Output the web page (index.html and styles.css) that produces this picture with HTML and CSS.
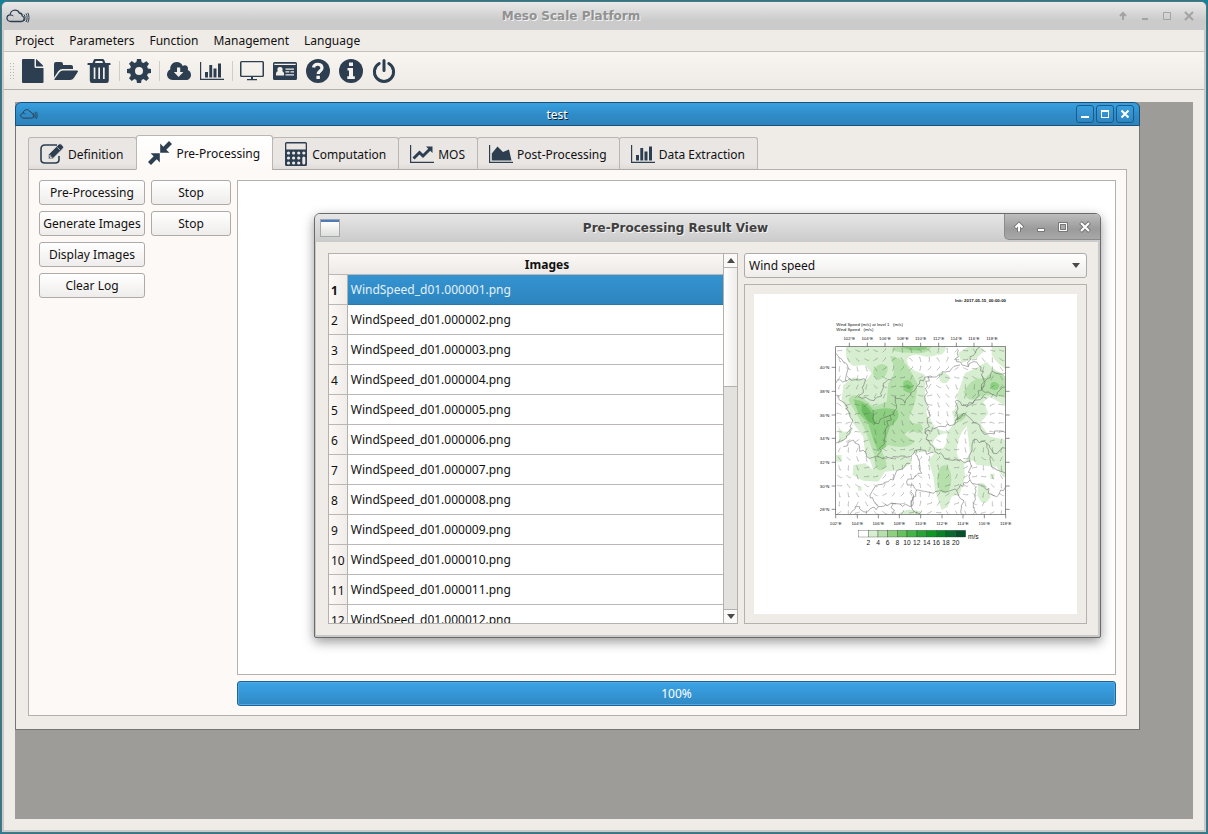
FILE: index.html
```html
<!DOCTYPE html>
<html lang="en">
<head>
<meta charset="utf-8">
<title>Meso Scale Platform</title>
<link rel="stylesheet" href="styles.css">
</head>
<body>
<svg class="sprite" aria-hidden="true">
  <symbol id="i-cloud" viewBox="0 0 24 14">
    <path d="M5 12.5C2.500 12.500 1 11 1 9.200 1 7.300 2.400 6 4.200 5.900 4.300 3.200 6.400 1.200 9 1.200c2 0 3.600 1.100 4.300 2.800 1.800.1 3 1.400 3 3 1.300.5 1.900 1.400 1.900 2.600 0 1.700-1.300 2.900-3 2.900z" fill="none" stroke="#2c3e50" stroke-width="1.300"/>
    <path d="M4.500 6c1.300 0 2.100.3 2.900 1M18 5.500c1.400 2 1.400 4.600 0 6.500M20 4.500c1.500 2.600 1.500 5.800 0 8.500M21.800 3.800c1.600 3 1.600 6.600 0 9.700" fill="none" stroke="#2c3e50" stroke-width="1"/>
  </symbol>
  <symbol id="i-file" viewBox="0 0 24 24"><path d="M2 0H13.500V7.500Q13.500 9 15 9H22.500V23Q22.500 24 21.500 24H2Q1 24 1 23V1Q1 0 2 0zM15 0.300Q15.800.4 16.300 1L21.500 6.100Q22 6.600 22.200 7.500H15z"/></symbol>
  <symbol id="i-folder" viewBox="0 0 24 24"><path d="M0 18.500V5Q0 3 2 3H7Q9 3 9 5V6H17Q19 6 19 8V10H8.500Q6 10 4.400 12zM.3 20.300L5.300 13.600Q6.700 11.600 9 11.600H23Q24.600 11.600 23.700 13L20 18.700Q18.500 21 16 21H1.200Q-.1 21 .3 20.300z"/></symbol>
  <symbol id="i-trash" viewBox="0 0 24 24"><path fill-rule="evenodd" d="M8 0H15.500Q16.800 0 17.300 1.200L18.400 4H23Q23.500 4 23.500 4.600V5.900H21.800V21.500Q21.800 24 19.500 24H5Q2.800 24 2.800 21.500V5.900H.5V4.600Q.5 4 1 4H5.500L6.600 1.200Q7 0 8 0zM8.700 1.900L7.900 4H16L15.200 1.900zM6.700 8.500V20H8.400V8.500zM11.300 8.500V20H13V8.500zM16 8.500V20H17.700V8.500z"/></symbol>
  <symbol id="i-gear" viewBox="0 0 24 24"><path fill-rule="evenodd" d="M10 0H14L14.700 3.200 16.600 4 19.400 2.200 22 4.800 20.100 7.500 20.900 9.400 24 10V14L20.900 14.600 20.100 16.500 22 19.300 19.300 22 16.500 20.100 14.600 20.900 14 24H10L9.400 20.900 7.500 20.100 4.700 22 2 19.300 3.900 16.500 3.100 14.600 0 14V10L3.100 9.400 3.900 7.500 2 4.700 4.700 2 7.500 3.900 9.400 3.100zM12 8A4 4 0 1 0 12 16A4 4 0 1 0 12 8z"/></symbol>
  <symbol id="i-download" viewBox="0 0 24 24"><path fill-rule="evenodd" d="M5.600 21C2.400 21 0 18.600 0 15.600 0 13.300 1.300 11.500 3.200 10.600 3 6.200 5.800 3 9.700 3c2.800 0 5 1.500 6 4 .6-.5 1.300-.8 2.100-.8 2 0 3.400 1.500 3.200 3.800l-.3 1c2 .6 3.300 2.500 3.300 5 0 2.900-2.100 5-4.900 5zM10 8.500V13H6.800L11.600 18 16.400 13H13.200V8.500z"/></symbol>
  <symbol id="i-bars" viewBox="0 0 24 24"><path d="M0 3H1.200V19.800H24V21H0zM5 13H8V18.500H5zM9.300 6H12.200V18.500H9.300zM13.500 9.500H16.500V18.500H13.500zM18 4.500H21V18.500H18z"/></symbol>
  <symbol id="i-desktop" viewBox="0 0 24 24"><path fill-rule="evenodd" d="M1.500 2H22.500Q24 2 24 3.500V16.500Q24 18 22.500 18H13V20H17V21.200H7V20H11V18H1.500Q0 18 0 16.500V3.500Q0 2 1.500 2zM1.500 3.300V16.700H22.500V3.300z"/></symbol>
  <symbol id="i-card" viewBox="0 0 24 24"><path fill-rule="evenodd" d="M1.500 3H22.500Q24 3 24 4.500V19.500Q24 21 22.500 21H1.500Q0 21 0 19.500V4.500Q0 3 1.500 3zM1.300 4.700V6H22.700V4.700zM3 16.500H11Q11.500 13 9.300 12.200 10.500 8 7 8 3.500 8 4.700 12.200 2.600 13 3 16.500zM12.500 9.500V10.700H21V9.500zM12.500 12.300V13.500H16.300V12.300zM17.500 12.300V13.500H21V12.300zM12.500 15.200V16.400H21V15.200z"/></symbol>
  <symbol id="i-help" viewBox="0 0 24 24"><circle cx="12" cy="12" r="12"/><path d="M7.500 8.500C8.500 3.700 16 4.500 16 9c0 3-3.800 3-3.800 6" fill="none" stroke="#f6f3ef" stroke-width="3.200"/><path fill="#f6f3ef" d="M10.400 16.700H13.900V20H10.400z"/></symbol>
  <symbol id="i-info" viewBox="0 0 24 24"><circle cx="12" cy="12" r="12"/><path fill="#f6f3ef" d="M10 3.500H14V7H10zM8.500 9H14V17.300H15.800V20H8.300V17.300H10V11.600H8.500z"/></symbol>
  <symbol id="i-power" viewBox="0 0 24 24"><path d="M7.200 4.500A9.600 9.600 0 1 0 16.800 4.500M12 1.500V11.500" fill="none" stroke="#2c3e50" stroke-width="3" stroke-linecap="round"/></symbol>
  <symbol id="i-edit" viewBox="0 0 24 24"><path d="M17 3H5Q1 3 1 7V17.500Q1 21 5 21H15Q19 21 19 17.500V14" fill="none" stroke="#2c3e50" stroke-width="1.600"/><path d="M8.500 12.500L18.800 2.300Q20 1.200 21.200 2.300L23 4.200Q24 5.300 23 6.400L12.700 16.700H8.500zM17.300 5.300L20 8.100" stroke="#e9e6e3" stroke-width=".6"/><path d="M10 12.800V15.300H12.300" fill="none" stroke="#e9e6e3"/></symbol>
  <symbol id="i-compress" viewBox="0 0 24 24"><path d="M12.200 11.800V2.600L15.300 5.700 21 0 24 3 18.300 8.700 21.400 11.800zM11.800 12.200V21.400L8.700 18.300 3 24 0 21 5.700 15.300 2.600 12.200z"/></symbol>
  <symbol id="i-calc" viewBox="0 0 24 24"><path fill-rule="evenodd" d="M2.500 0H21.500Q23 0 23 1.500V22.500Q23 24 21.500 24H2.500Q1 24 1 22.500V1.500Q1 0 2.500 0zM2.300 1.500V7.500H21.700V1.500z"/><g fill="#ebe8e5"><circle cx="4.500" cy="11" r="1.600"/><circle cx="9.600" cy="11" r="1.600"/><circle cx="14.700" cy="11" r="1.600"/><circle cx="19.800" cy="11" r="1.600"/><circle cx="4.500" cy="16" r="1.600"/><circle cx="9.600" cy="16" r="1.600"/><circle cx="14.700" cy="16" r="1.600"/><circle cx="4.500" cy="21" r="1.600"/><circle cx="9.600" cy="21" r="1.600"/><circle cx="14.700" cy="21" r="1.600"/><rect x="18.300" y="14.500" width="3" height="8" rx="1.500"/></g></symbol>
  <symbol id="i-line" viewBox="0 0 24 24"><path d="M0 3H1.200V19.800H24V21H0z"/><path d="M3.500 16.500L9.500 10.500 13 14 20.500 6.500" fill="none" stroke="#2c3e50" stroke-width="3"/><path d="M16 4.500H22.500V11z"/></symbol>
  <symbol id="i-area" viewBox="0 0 24 24"><path d="M0 3H1.200V19.800H24V21H0zM2.800 18.500V11.500L8.500 4.500 14 10 20 7.500 22.500 18.500z"/></symbol>
</svg>

<div class="frame">
  <header class="titlebar">
    <svg class="app-icon"><use href="#i-cloud"/></svg>
    <h1>Meso Scale Platform</h1>
    <div class="win-buttons">
      <button aria-label="Shade"><svg viewBox="0 0 10 10"><path d="M5 9V2M2 5L5 2 8 5" fill="none" stroke="currentColor" stroke-width="2"/></svg></button>
      <button aria-label="Minimize"><svg viewBox="0 0 10 10"><path d="M2 7H8V9H2z" fill="currentColor"/></svg></button>
      <button aria-label="Maximize"><svg viewBox="0 0 10 10"><path d="M1.500 1.500H8.500V8.500H1.500z" fill="none" stroke="currentColor"/></svg></button>
      <button aria-label="Close"><svg viewBox="0 0 10 10"><path d="M1 1L9 9M9 1L1 9" stroke="currentColor" stroke-width="2"/></svg></button>
    </div>
  </header>
  <nav class="menubar">
    <button>Project</button><button>Parameters</button><button>Function</button><button>Management</button><button>Language</button>
  </nav>
  <div class="toolbar">
    <span class="grip"></span>
    <button aria-label="New"><svg><use href="#i-file"/></svg></button>
    <button aria-label="Open"><svg><use href="#i-folder"/></svg></button>
    <button aria-label="Delete"><svg><use href="#i-trash"/></svg></button>
    <span class="sep"></span>
    <button aria-label="Settings"><svg><use href="#i-gear"/></svg></button>
    <span class="sep"></span>
    <button aria-label="Download"><svg><use href="#i-download"/></svg></button>
    <button aria-label="Charts"><svg><use href="#i-bars"/></svg></button>
    <span class="sep"></span>
    <button aria-label="Display"><svg><use href="#i-desktop"/></svg></button>
    <button aria-label="License"><svg><use href="#i-card"/></svg></button>
    <button aria-label="Help"><svg><use href="#i-help"/></svg></button>
    <button aria-label="About"><svg><use href="#i-info"/></svg></button>
    <button aria-label="Quit"><svg><use href="#i-power"/></svg></button>
  </div>

  <main class="workspace">
    <div class="mdi">
      <section class="sub-window">
        <header class="sub-title">
          <svg class="sub-icon"><use href="#i-cloud"/></svg>
          <h2>test</h2>
          <div class="sub-buttons">
            <button aria-label="Minimize"><svg viewBox="0 0 10 10"><path d="M1 7H9V9H1z" fill="#fff"/></svg></button>
            <button aria-label="Maximize"><svg viewBox="0 0 10 10"><path fill-rule="evenodd" d="M1 1H9V9H1zM2 3V8H8V3z" fill="#fff"/></svg></button>
            <button aria-label="Close"><svg viewBox="0 0 10 10"><path d="M1.500 1.500L8.500 8.500M8.500 1.500L1.500 8.500" stroke="#fff" stroke-width="2"/></svg></button>
          </div>
        </header>
        <div class="sub-body">
          <div class="tabs" role="tablist">
            <button role="tab"><svg><use href="#i-edit"/></svg><span>Definition</span></button>
            <button role="tab" class="active" aria-selected="true"><svg><use href="#i-compress"/></svg><span>Pre-Processing</span></button>
            <button role="tab"><svg><use href="#i-calc"/></svg><span>Computation</span></button>
            <button role="tab"><svg><use href="#i-line"/></svg><span>MOS</span></button>
            <button role="tab"><svg><use href="#i-area"/></svg><span>Post-Processing</span></button>
            <button role="tab"><svg><use href="#i-bars"/></svg><span>Data Extraction</span></button>
          </div>
          <div class="panel">
            <div class="actions">
              <button class="btn">Pre-Processing</button><button class="btn">Stop</button>
              <button class="btn">Generate Images</button><button class="btn">Stop</button>
              <button class="btn">Display Images</button><span></span>
              <button class="btn">Clear Log</button>
            </div>
            <div class="output">
              <div class="log">
                <section class="dialog">
                  <header class="dialog-title">
                    <span class="dialog-icon"></span>
                    <h2>Pre-Processing Result View</h2>
                    <div class="win-buttons raised">
                      <button aria-label="Shade"><svg viewBox="0 0 12 12"><path d="M6 11V3M2 7L6 3 10 7" fill="none" stroke="#777" stroke-width="4"/><path d="M6 10.500V3M2.500 6.500L6 3 9.500 6.500" fill="none" stroke="#fff" stroke-width="2"/></svg></button>
                      <button aria-label="Minimize"><svg viewBox="0 0 12 12"><path d="M2.500 7.500H9.500V10.500H2.500z" fill="#fff" stroke="#777"/></svg></button>
                      <button aria-label="Maximize"><svg viewBox="0 0 12 12"><path d="M1.500 1.500H10.500V10.500H1.500z" fill="#aaa" stroke="#777"/><path d="M2.500 2.500H9.500V9.500H2.500z" fill="none" stroke="#fff"/><path d="M3.500 3.500H8.500V8.500H3.500z" fill="none" stroke="#777"/></svg></button>
                      <button aria-label="Close"><svg viewBox="0 0 12 12"><path d="M1.500 1.500L10.500 10.500M10.500 1.500L1.500 10.500" stroke="#777" stroke-width="4"/><path d="M2 2L10 10M10 2L2 10" stroke="#fff" stroke-width="2"/></svg></button>
                    </div>
                  </header>
                  <div class="dialog-body">
                    <div class="list">
                      <div class="list-view">
                        <table>
                          <thead><tr><th colspan="2">Images</th></tr></thead>
                          <tbody>
                            <tr class="selected"><th>1</th><td>WindSpeed_d01.000001.png</td></tr>
                            <tr><th>2</th><td>WindSpeed_d01.000002.png</td></tr>
                            <tr><th>3</th><td>WindSpeed_d01.000003.png</td></tr>
                            <tr><th>4</th><td>WindSpeed_d01.000004.png</td></tr>
                            <tr><th>5</th><td>WindSpeed_d01.000005.png</td></tr>
                            <tr><th>6</th><td>WindSpeed_d01.000006.png</td></tr>
                            <tr><th>7</th><td>WindSpeed_d01.000007.png</td></tr>
                            <tr><th>8</th><td>WindSpeed_d01.000008.png</td></tr>
                            <tr><th>9</th><td>WindSpeed_d01.000009.png</td></tr>
                            <tr><th>10</th><td>WindSpeed_d01.000010.png</td></tr>
                            <tr><th>11</th><td>WindSpeed_d01.000011.png</td></tr>
                            <tr><th>12</th><td>WindSpeed_d01.000012.png</td></tr>
                          </tbody>
                        </table>
                      </div>
                      <div class="scrollbar">
                        <button aria-label="Scroll up"><svg viewBox="0 0 8 5"><path d="M0 5L4 0 8 5z"/></svg></button>
                        <div class="track"><div class="thumb"></div></div>
                        <button aria-label="Scroll down"><svg viewBox="0 0 8 5"><path d="M0 0L4 5 8 0z"/></svg></button>
                      </div>
                    </div>
                    <div class="viewer">
                      <div class="combo">
                        <select aria-label="Variable"><option>Wind speed</option></select>
                        <svg viewBox="0 0 8 5"><path d="M0 0L4 5 8 0z"/></svg>
                      </div>
                      <div class="picture">
                        <svg class="map" viewBox="0 0 969 960" preserveAspectRatio="none" role="img" aria-label="Wind speed map">
                          <defs><clipPath id="area"><rect x="77" y="170" width="510" height="503"/></clipPath></defs>
                          <rect width="969" height="960" fill="#fff"/>
                          <g transform="translate(168 -12)">
                            <g clip-path="url(#area)">
                              <g fill="#d7eed1">
                                <path d="M108 165H390L382 195Q350 205 330 195 300 190 290 210 295 240 335 250 355 255 345 290 345 330 352 345 345 380 360 385 370 420 410 425 445 400 425 365 450 350 440 320 450 290 465 250 500 235 530 215 550 240 590 260V350L540 320 520 335 535 370 510 400 540 440 590 450V560Q580 570 560 530L500 525 490 510 462 520 465 560 450 610 425 620 412 652 395 660 375 600 370 560 355 510 375 490Q330 480 300 495L305 520 270 540 225 545 205 575 160 572 128 555 130 525 165 520 190 540 180 510 165 490 160 440 130 400 95 330 100 285 130 262 170 270 185 250 165 225 130 228Q108 215 108 190z"/>
                                <path d="M370 165H410Q405 195 385 195zM445 190Q490 150 525 180L500 205 455 218zM545 170H590V240Q560 220 545 195zM85 405Q95 440 130 415 110 450 88 460zM265 673Q285 650 335 665V680H265zM505 580Q530 570 542 620 520 660 502 615zM387 250Q400 240 418 258 420 280 400 280 385 275 387 250zM78 495H95V515H78z"/>
                                <path d="M143 590h12v12h-10zM541 551h12v16h-12z"/>
                              </g>
                              <g fill="#fff">
                                <path d="M410 430Q380 430 368 460 375 480 400 475 415 460 410 430zM470 408Q440 440 440 490 460 540 480 490 475 440 470 408zM78 300L95 340 115 400 78 410z"/>
                              </g>
                              <g fill="#b5e0ab">
                                <path d="M240 198Q270 200 290 225 310 255 322 280 320 340 300 375 290 405 330 400 350 420 325 430 290 415 285 435L315 455Q290 480 235 465L215 480 230 520Q225 545 205 540 190 530 195 500L180 460 165 420 150 390 115 330Q125 305 160 325L190 350 230 335 235 280Q265 250 240 198zM190 240Q210 210 233 230 235 260 205 270 185 260 190 240zM250 170H365Q350 195 310 188 270 190 245 180zM465 300Q485 260 525 265 560 225 590 265V325Q540 305 500 325 475 340 460 305zM440 375Q455 365 470 375 455 400 440 395z"/>
                                <ellipse cx="403" cy="568" rx="21" ry="42"/>
                              </g>
                              <g fill="#8dcf81">
                                <path d="M280 275Q300 260 310 290 305 320 280 300zM275 168H350V178Q310 188 275 172zM130 328Q165 330 190 360 230 350 262 360 275 385 240 410L230 440 228 470 205 485 190 450 175 400 145 370zM540 285Q550 265 568 285 565 305 545 298z"/>
                              </g>
                              <path fill="#6cbd62" d="M155 340Q175 350 190 375L195 405 175 395 155 365zM286 285q12-5 16 8-5 10-16-1z"/>
                              <g id="borders"></g>
                              <path id="barbs" class="barbs"/>
                            </g>
                            <rect x="77" y="170" width="510" height="503" class="rule"/>
                            <path class="rule" d="M118 170V158M172 170V158M225 170V158M278 170V158M332 170V158M386 170V158M439 170V158M492 170V158M546 170V158M77 673V685M142 673V685M205 673V685M268 673V685M332 673V685M396 673V685M459 673V685M523 673V685M587 673V685M77 232H65M77 304H65M77 375H65M77 445H65M77 517H65M77 588H65M77 658H65M587 232H599M587 304H599M587 375H599M587 445H599M587 517H599M587 588H599M587 658H599"/>
                            <g class="tick">
                              <text x="118" y="149">102°E</text><text x="172" y="149">104°E</text><text x="225" y="149">106°E</text><text x="278" y="149">108°E</text><text x="332" y="149">110°E</text><text x="386" y="149">112°E</text><text x="439" y="149">114°E</text><text x="492" y="149">116°E</text><text x="546" y="149">118°E</text>
                              <text x="77" y="704">102°E</text><text x="142" y="704">104°E</text><text x="205" y="704">106°E</text><text x="268" y="704">108°E</text><text x="332" y="704">110°E</text><text x="396" y="704">112°E</text><text x="459" y="704">114°E</text><text x="523" y="704">116°E</text><text x="587" y="704">118°E</text>
                              <text x="44" y="237">40°N</text><text x="44" y="309">38°N</text><text x="44" y="380">36°N</text><text x="44" y="450">34°N</text><text x="44" y="522">32°N</text><text x="44" y="593">30°N</text><text x="44" y="663">28°N</text>
                            </g>
                            <text class="init" x="588" y="36">Init: 2017-05-15_00:00:00</text>
                            <text class="caption" x="79" y="107" xml:space="preserve">Wind Speed (m/s) at level 1   (m/s)</text>
                            <text class="caption" x="79" y="122" xml:space="preserve">Wind Speed   (m/s)</text>
                            <g class="legend" transform="translate(146 721)">
                              <rect width="29" height="20" fill="#fff"/><rect x="29" width="29" height="20" fill="#d7eed1"/><rect x="58" width="29" height="20" fill="#b5e0ab"/><rect x="87" width="29" height="20" fill="#8dcf81"/><rect x="116" width="29" height="20" fill="#66c05c"/><rect x="145" width="30" height="20" fill="#43b446"/><rect x="175" width="29" height="20" fill="#26a535"/><rect x="204" width="29" height="20" fill="#0e9a22"/><rect x="233" width="29" height="20" fill="#078325"/><rect x="262" width="29" height="20" fill="#056a2b"/><rect x="291" width="30" height="20" fill="#04502a"/>
                              <text x="29" y="43">2</text><text x="58" y="43">4</text><text x="87" y="43">6</text><text x="116" y="43">8</text><text x="145" y="43">10</text><text x="174" y="43">12</text><text x="204" y="43">14</text><text x="233" y="43">16</text><text x="262" y="43">18</text><text x="291" y="43">20</text>
                              <text x="344" y="27">m/s</text>
                            </g>
                          </g>
                        </svg>
                      </div>
                    </div>
                  </div>
                </section>
              </div>
              <div class="progress" role="progressbar" aria-valuenow="100">100%</div>
            </div>
          </div>
        </div>
      </section>
    </div>
  </main>
</div>
<script src="map.js"></script>
</body>
</html>
```

FILE: styles.css
```css
* { box-sizing: border-box; }

body {
  margin: 0;
  background: #10839d;
  color: #111;
  font: 12px/16px "Noto Sans", "Open Sans", sans-serif;
}

button, select { font: inherit; color: inherit; }
button { margin: 0; padding: 0; border: 0; background: none; }
h1, h2 { margin: 0; }
svg { display: block; fill: #2c3e50; }
.sprite { position: absolute; width: 0; height: 0; }

.frame {
  display: flex;
  flex-direction: column;
  min-height: calc(100vh - 2px);
  margin: 1px;
  border: 1px solid #6b6b6b;
  border-radius: 6px 6px 0 0;
  background: #c9c9ca;
  overflow: hidden;
}

.titlebar {
  display: flex;
  align-items: center;
  height: 28px;
  padding: 0 6px 0 4px;
  background: linear-gradient(#e9e9e9, #cbcbcb 65%, #cbcbcb);
}
.titlebar h1, .dialog-title h2 {
  flex: 1;
  text-align: center;
  font: bold 12px/16px "DejaVu Sans", sans-serif;
  text-shadow: 1px 1px 0 #f2f2f2;
}
.titlebar h1 { color: #919191; }
.app-icon { width: 24px; height: 14px; }

.win-buttons { display: flex; color: #a3a3a3; }
.win-buttons button { display: flex; justify-content: center; align-items: center; width: 22px; height: 22px; }
.win-buttons svg { width: 10px; height: 10px; }

.menubar {
  display: flex;
  gap: 15px;
  height: 22px;
  margin: 0 2px;
  padding: 0 11px;
  border-bottom: 1px solid #c3c0bd;
  background: #efebe7;
}

.toolbar {
  display: flex;
  align-items: center;
  height: 38px;
  margin: 0 2px;
  padding: 0 5px;
  border-bottom: 1px solid #b3afac;
  background: linear-gradient(#f8f5f1, #eeeae6);
}
.toolbar button { display: flex; justify-content: center; width: 33px; }
.toolbar svg { width: 24px; height: 24px; }
.grip {
  width: 6px;
  height: 18px;
  margin-right: 1px;
  background: radial-gradient(circle, #b9b5b1 30%, transparent 40%) 0 0 / 3px 3px;
}
.sep { width: 1px; height: 20px; margin: 0 2px 0 4px; background: #d0ccc8; }

.workspace {
  display: flex;
  flex: 1;
  margin: 0 2px 2px;
  padding: 12px 11px 11px;
  background: #efebe7;
}
.mdi { position: relative; flex: 1; min-height: 700px; background: #9e9c98; }

/* Child window placed on the desktop area */
.sub-window {
  position: absolute;
  inset: 0 53px 89px 0;
  display: flex;
  flex-direction: column;
  border: 1px solid #757575;
  border-top: 0;
  border-radius: 6px 6px 0 0;
  background: #efebe7;
}
.sub-title {
  display: flex;
  align-items: center;
  height: 24px;
  margin: 0 -1px;
  padding: 0 5px 0 4px;
  border: 1px solid #1b5077;
  border-radius: 6px 6px 0 0;
  background: linear-gradient(#38a0e0, #2f8bc6 55%, #2d84be);
}
.sub-title h2 {
  flex: 1;
  padding-top: 2px;
  text-align: center;
  color: #fff;
  font: 12px/16px "Noto Sans", sans-serif;
  text-shadow: 1px 1px 0 #123;
}
.sub-icon { width: 18px; height: 12px; }
.sub-buttons { display: flex; gap: 2px; }
.sub-buttons button {
  display: flex;
  justify-content: center;
  align-items: center;
  width: 18px;
  height: 18px;
  border: 1px solid #1b5a88;
  border-radius: 3px;
  background: linear-gradient(#3a9edc, #2e86c1);
}
.sub-buttons svg { width: 10px; height: 10px; }

.sub-body { display: flex; flex-direction: column; flex: 1; padding: 9px 12px 13px; }

.tabs { display: flex; align-items: flex-end; height: 35px; margin-bottom: -1px; z-index: 1; }
.tabs button {
  display: flex;
  align-items: center;
  gap: 4px;
  height: 33px;
  margin-right: -1px;
  padding: 0 12px 0 11px;
  border: 1px solid #bab6b3;
  border-bottom-color: #aeaaa7;
  border-radius: 3px 3px 0 0;
  background: linear-gradient(#e9e6e4 80%, #dfdcd9);
}
.tabs button:first-child { padding-right: 13px; }
.tabs svg { width: 24px; height: 24px; }
.tabs span { padding-top: 2px; }
.tabs .active {
  height: 35px;
  border-bottom-color: #fdf9f6;
  background: linear-gradient(#fff, #fdf9f6);
}

.panel {
  display: flex;
  flex: 1;
  gap: 6px;
  padding: 10px;
  padding-bottom: 9px;
  border: 1px solid #b4b0ad;
  background: #fdf9f6;
}
.actions {
  display: grid;
  grid-template-columns: 106px 80px;
  align-content: start;
  gap: 6px;
}
.btn {
  height: 25px;
  border: 1px solid #aeaaa7;
  border-radius: 3px;
  background: linear-gradient(#fff, #efedeb);
  white-space: nowrap;
}
.output { display: flex; flex: 1; flex-direction: column; gap: 6px; }
.log { position: relative; flex: 1; border: 1px solid #b4b0ad; background: #fff; }
.progress {
  height: 25px;
  border: 1px solid #1d649a;
  border-radius: 3px;
  background: linear-gradient(#3ba4e8, #2f88c2);
  box-shadow: inset 0 0 0 1px #55a9df;
  color: #fff;
  line-height: 23px;
  text-align: center;
}

/* Result dialog floating over the log */
.dialog {
  position: absolute;
  inset: 32px 14px 36px 76px;
  display: flex;
  flex-direction: column;
  border: 1px solid #6b6b6b;
  border-radius: 6px 6px 2px 2px;
  background: #c9c9c9;
  box-shadow: 0 4px 12px rgba(0, 0, 0, .4);
}
.dialog-title {
  display: flex;
  align-items: flex-start;
  height: 28px;
  padding-left: 5px;
  border-radius: 5px 5px 0 0;
  background: linear-gradient(#e6e6e6, #cbcbcb);
}
.dialog-title h2 { padding: 6px 0 0 7px; color: #3f3f3f; }
.dialog-icon {
  width: 20px;
  height: 18px;
  margin-top: 5px;
  border: 1px solid #a5a8ab;
  border-top-color: #98a4b6;
  background: linear-gradient(#5079b8 2px, #fff 2px, #dedfdb);
}
.raised {
  height: 26px;
  padding: 2px 4px 0 3px;
  border: 1px solid #8b8b8b;
  border-width: 0 0 1px 1px;
  border-radius: 0 5px 0 5px;
  background: linear-gradient(#bdbdbd, #9b9b9b 60%, #a8a8a8);
}
.raised svg { width: 12px; height: 12px; }

.dialog-body {
  display: grid;
  grid-template-columns: minmax(0, 410fr) minmax(0, 343fr);
  gap: 6px;
  flex: 1;
  min-height: 0;
  margin: 0 2px 2px 1px;
  padding: 11px 11px 11px 12px;
  background: #efebe7;
}

.list { display: flex; min-height: 0; border: 1px solid #b4b0ad; background: #fff; }
.list-view { flex: 1; height: 0; min-height: 100%; overflow: hidden; }
table { width: 100%; border-spacing: 0; }
th, td { height: 30px; padding: 0 3px; border-bottom: 1px solid #bbb7b4; text-align: left; }
tbody th {
  width: 18px;
  padding: 2px 2px 0;
  border-right: 1px solid #b4b0ad;
  background: linear-gradient(90deg, #fbf8f6, #efecea);
  font-weight: normal;
}
thead th {
  height: 21px;
  padding: 2px 0 0 42px;
  text-align: center;
  background: linear-gradient(#fbf8f5, #ece9e6);
}
.selected th { font-weight: bold; }
.selected td { background: linear-gradient(#3493d0, #2d85be); border-color: #2978ac; color: #e4f1fa; }

.scrollbar { display: flex; flex-direction: column; width: 14px; border-left: 1px solid #b4b0ad; background: #e3e2de; }
.scrollbar button { display: flex; justify-content: center; align-items: center; height: 13px; background: #fbf9f8; }
.scrollbar svg, .combo svg { width: 8px; height: 5px; fill: #4c4a49; }
.track { flex: 1; border: 1px solid #b4b0ad; border-width: 1px 0; }
.thumb { height: 35%; border-bottom: 1px solid #b4b0ad; background: linear-gradient(90deg, #fff, #efedeb); }

.viewer { display: flex; flex-direction: column; gap: 6px; min-height: 0; }
.combo { position: relative; }
.combo select {
  display: block;
  width: 100%;
  height: 25px;
  padding: 0 4px;
  border: 1px solid #aeaaa7;
  border-radius: 3px;
  background: linear-gradient(#fff, #efedeb);
  appearance: none;
}
.combo svg { position: absolute; right: 7px; top: 10px; pointer-events: none; }
.picture { display: flex; flex: 1; min-height: 0; padding: 9px; border: 1px solid #b4b0ad; }
.map { flex: 1; width: 100%; height: 100%; font-family: "Liberation Sans", Arial, sans-serif; }
.map text { fill: #111; }
.rule { fill: none; stroke: #555; stroke-width: 2; }
.barbs { fill: none; stroke: #555; stroke-width: 1; }
.border { fill: none; stroke: #555; stroke-width: 2; stroke-opacity: .7; }
.tick { font-size: 13px; text-anchor: middle; }
.init { font-size: 13px; font-weight: bold; text-anchor: end; }
.caption { font-size: 13px; }
.legend { font-size: 20px; text-anchor: middle; }
.legend rect { stroke: #333; stroke-width: 1; }
```

FILE: map.js
```js
(function () {
  var seed = 11;
  function rnd() {
    seed = (seed * 16807) % 2147483647;
    return seed / 2147483647;
  }

  // Wind barbs on a regular grid, direction varying smoothly over the area
  var d = "";
  for (var y = 182; y < 673; y += 27) {
    for (var x = 88; x < 587; x += 27) {
      var a = Math.sin(x / 70) * 1.4 + Math.cos(y / 60) * 1.3 + rnd() * 1.5;
      var dx = Math.cos(a) * 7, dy = Math.sin(a) * 7;
      d += "M" + (x - dx).toFixed(0) + " " + (y - dy).toFixed(0) +
           "L" + (x + dx).toFixed(0) + " " + (y + dy).toFixed(0) +
           "l" + (dy * 0.4).toFixed(0) + " " + (-dx * 0.4).toFixed(0);
    }
  }
  document.getElementById("barbs").setAttribute("d", d);

  // Province outlines, roughened between their control points
  var lines = [
    [77, 280, 120, 265, 165, 268, 160, 300, 145, 320, 180, 330, 215, 318, 220, 280, 245, 270],
    [77, 315, 105, 340, 128, 390, 120, 430, 77, 460],
    [190, 360, 195, 400, 240, 375, 260, 355, 255, 320, 285, 340, 330, 270, 385, 255, 450, 225],
    [240, 375, 225, 440, 205, 500, 170, 500, 130, 450, 100, 470],
    [355, 260, 345, 330, 360, 380, 345, 430, 375, 485, 420, 510, 480, 515],
    [345, 430, 385, 410, 430, 405, 460, 370, 500, 400, 520, 430, 587, 428],
    [445, 180, 440, 215, 475, 230, 480, 200, 510, 170],
    [475, 230, 490, 215, 520, 245, 515, 300, 470, 350, 440, 330, 440, 390, 460, 370],
    [515, 300, 545, 245, 587, 250],
    [515, 300, 560, 320, 587, 290],
    [470, 350, 500, 330, 530, 325],
    [205, 500, 245, 505, 300, 500, 320, 480, 370, 490],
    [320, 480, 335, 550, 290, 575, 320, 600, 375, 605, 440, 600, 480, 570, 480, 515],
    [180, 615, 195, 590, 250, 570, 265, 540, 300, 520],
    [180, 615, 205, 650, 250, 640, 300, 650, 320, 600],
    [305, 600, 308, 660, 330, 673],
    [440, 600, 460, 630, 455, 673],
    [480, 570, 520, 590, 560, 620, 587, 590],
    [480, 515, 490, 450, 530, 460, 550, 490, 587, 475],
    [500, 590, 490, 640, 500, 673],
    [120, 673, 135, 650, 160, 665, 205, 650],
    [77, 190, 115, 235, 110, 275],
    [245, 673, 250, 640],
    [530, 460, 545, 530, 587, 550]
  ];
  var g = document.getElementById("borders");
  lines.forEach(function (p) {
    var s = "M" + p[0] + " " + p[1];
    for (var i = 2; i < p.length; i += 2) {
      var n = Math.max(2, Math.round(Math.hypot(p[i] - p[i - 2], p[i + 1] - p[i - 1]) / 9));
      for (var k = 1; k <= n; k++) {
        var j = k < n ? 12 : 0;
        s += "L" + (p[i - 2] + (p[i] - p[i - 2]) * k / n + (rnd() - 0.5) * j).toFixed(0) +
             " " + (p[i - 1] + (p[i + 1] - p[i - 1]) * k / n + (rnd() - 0.5) * j).toFixed(0);
      }
    }
    var e = document.createElementNS("http://www.w3.org/2000/svg", "path");
    e.setAttribute("d", s);
    e.setAttribute("class", "border");
    g.appendChild(e);
  });
})();
```
